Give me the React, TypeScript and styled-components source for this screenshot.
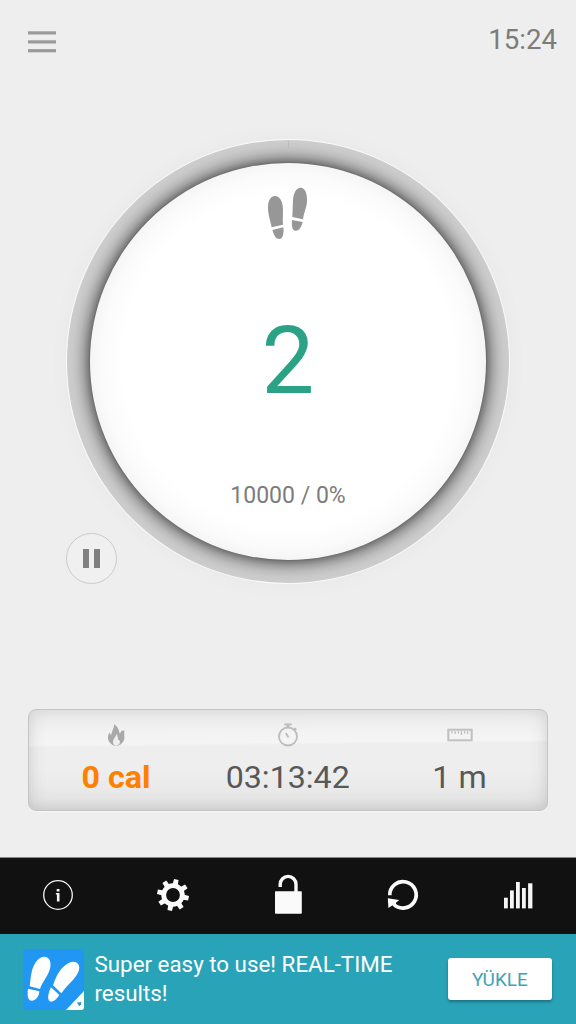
import React from 'react';
import styled, { createGlobalStyle } from 'styled-components';

const GlobalStyle = createGlobalStyle`
  * { box-sizing: border-box; }
  body {
    margin: 0;
    background: #eeeeee;
    font-family: Roboto, "Liberation Sans", sans-serif;
  }
  svg { display: block; }
`;

const Screen = styled.main`
  width: 576px;
  height: 1024px;
  display: flex;
  flex-direction: column;
  background: #eeeeee;
  overflow: hidden;
`;

const TopBar = styled.header`
  height: 139px;
  padding: 21px 19px 0 28px;
  display: flex;
  justify-content: space-between;
  align-items: flex-start;
`;

const MenuIcon = styled.svg`
  margin-top: 9px;
`;

const Clock = styled.time`
  margin-top: 1px;
  font-size: 27.6px;
  line-height: 36px;
  color: #7c7c7c;
`;

const Main = styled.section`
  position: relative;
  height: 570px;
  display: flex;
  flex-direction: column;
  align-items: center;
`;

const Dial = styled.div`
  width: 444px;
  height: 445px;
  flex: none;
  padding: 24px;
  border-radius: 50%;
  border: 1px solid #f9f9f9;
  background: radial-gradient(closest-side, #666 89.4%, #808080 90.5%, #a4a4a4 92.7%, #bcbcbc 95%, #c9c9c9 97.4%, #cdcdcd 100%);
  box-shadow: 0 0 22px rgba(0, 0, 0, 0.03);
`;

const DialTick = styled.span`
  position: absolute;
  top: 2px;
  left: 288px;
  width: 1px;
  height: 8px;
  background: #bcbcbc;
`;

const Face = styled.div`
  width: 396px;
  height: 397px;
  margin: -1px;
  padding-top: 23px;
  display: flex;
  flex-direction: column;
  align-items: center;
  border-radius: 50%;
  background: radial-gradient(closest-side, #fff 84%, #fbfbfb 94%, #f5f5f5 100%);
`;

const StepCount = styled.div`
  margin-top: 64px;
  font-size: 94px;
  line-height: 112px;
  color: #2ba286;
`;

const Goal = styled.div`
  margin-top: 65px;
  font-size: 23px;
  line-height: 28px;
  color: #7c7c7c;
`;

const PauseButton = styled.button`
  position: absolute;
  left: 66px;
  top: 394px;
  width: 51px;
  height: 51px;
  padding: 0;
  display: flex;
  gap: 4.5px;
  align-items: center;
  justify-content: center;
  border: 1.5px solid #cbcbcb;
  border-radius: 50%;
  background: #f0f0f0;
`;

const PauseBar = styled.span`
  width: 6.5px;
  height: 19px;
  background: #808080;
`;

const Stats = styled.section`
  height: 102px;
  margin: 0 28.5px 0 28px;
  display: grid;
  grid-template-columns: 174px 1fr 174px;
  border: 1px solid #c3c3c3;
  border-radius: 8px;
  background:
    linear-gradient(179.4deg, rgba(255, 255, 255, 0) 5%, rgba(255, 255, 255, 0.4) 33%, rgba(255, 255, 255, 0) 36%),
    linear-gradient(#eeeeee 60%, #e4e4e4 100%);
  box-shadow: inset 0 0 20px rgba(0, 0, 0, 0.1), inset 0 -3px 12px rgba(0, 0, 0, 0.05), 0 1px 1px #f8f8f8;
`;

const Stat = styled.div<{ $accent?: boolean }>`
  display: flex;
  flex-direction: column;
  align-items: center;
  padding-top: 10px;
  font-size: 32.2px;
  line-height: 38px;
  color: ${(p) => (p.$accent ? '#ff8000' : '#585858')};
  font-weight: ${(p) => (p.$accent ? 700 : 400)};
`;

const StatIcon = styled.svg`
  width: 30px;
  height: 30px;
  margin-bottom: 8px;
`;

const NavBar = styled.nav`
  height: 77px;
  margin-top: 46px;
  display: grid;
  grid-template-columns: repeat(5, 1fr);
  border-top: 1px solid #8a8a8a;
  background: #111111;
`;

const NavItem = styled.button`
  border: 0;
  padding: 0;
  background: none;
  display: flex;
  align-items: center;
  justify-content: center;
`;

const NavIcon = styled.svg`
  width: 44px;
  height: 44px;
  margin-top: -2px;
`;

const Ad = styled.aside`
  height: 90px;
  display: flex;
  padding: 0 24px 0 23px;
  background: #29a3b7;
`;

const AdIcon = styled.svg`
  width: 61px;
  height: 61px;
  margin-top: 15px;
`;

const AdText = styled.p`
  width: 320px;
  margin: 16px 0 0 10.5px;
  font-size: 22.35px;
  line-height: 29px;
  color: #fff;
`;

const AdButton = styled.button`
  width: 104px;
  height: 42px;
  margin: 24px 0 0 auto;
  padding: 0;
  border: 0;
  border-radius: 3px;
  background: #fff;
  box-shadow: 0 2px 3px rgba(0, 0, 0, 0.3);
  font: 400 19px Roboto, sans-serif;
  color: #3fa5b6;
`;

const gearTeeth = [0, 45, 90, 135, 180, 225, 270, 315];

export default function App() {
  return (
    <>
      <GlobalStyle />
      <Screen>
        <TopBar>
          <MenuIcon width="28" height="24" viewBox="0 0 28 24" fill="#9a9a9a">
            <rect y="1.3" width="28" height="3.2" />
            <rect y="10.3" width="28" height="3.2" />
            <rect y="19.1" width="28" height="3.2" />
          </MenuIcon>
          <Clock>15:24</Clock>
        </TopBar>

        <Main>
          <Dial>
            <Face>
              <svg width="44" height="55" viewBox="54 168 132 165" fill="#979797">
                <path d="M71 292C67 270 60 257 60 232C60 211 69 198 81 198C95 198 105 214 105 239C105 257 104 267 105 284Z" />
                <path d="M73 300L106 292C108 309 105 327 94 327C82 327 78 315 73 300Z" />
                <path d="M133 261C134 245 134 231 135 211C136 189 145 173 158 173C171 173 178 190 177 213C176 234 168 246 165 268Z" />
                <path d="M132 270L164 276C160 290 155 302 143 302C131 302 131 286 132 270Z" />
              </svg>
              <StepCount>2</StepCount>
              <Goal>10000 / 0%</Goal>
            </Face>
          </Dial>
          <DialTick />
          <PauseButton aria-label="Pause">
            <PauseBar />
            <PauseBar />
          </PauseButton>
        </Main>

        <Stats>
          <Stat $accent>
            <StatIcon viewBox="0 0 30 30">
              <path fill="#a9a9a9" d="M13 4C16.5 6.5 18.5 10 18.5 13.5C19.8 13 20.3 12 20.3 10.8L23.5 10.5C22.7 14 23.8 16.5 23.3 19C22.5 22.5 19.5 25.3 15.5 26C11 25.4 7.5 22.7 7 18.5C6.8 16 7.5 14 8.7 12.8L10.2 15.5C10.6 10.5 13.6 8 13 4Z" />
              <path fill="#efefef" d="M15.6 14C15 17 12.2 18.7 12 21.5C11.9 24 13.2 25.6 15.2 25.8C17.6 25.4 19 23.8 18.9 21.8C18.8 20.8 18.3 20 17.6 19.2L17 20.6C17.1 18 16.7 16 15.6 14Z" />
            </StatIcon>
            0 cal
          </Stat>
          <Stat>
            <StatIcon viewBox="0 0 30 30" fill="none" stroke="#bcbcbc" strokeWidth="1.8">
              <circle cx="15" cy="16.5" r="9" />
              <path d="M11.2 4.4H18.8M21.3 8L23.3 10M15.5 17.5L12.8 13" />
              <path strokeWidth="3" d="M15 4V8" />
            </StatIcon>
            03:13:42
          </Stat>
          <Stat>
            <StatIcon viewBox="0 0 30 30" fill="none" stroke="#c0c0c0" strokeWidth="2">
              <rect x="3.3" y="9.7" width="23.4" height="10.6" />
              <path strokeWidth="1.3" d="M7 11V13.5M10.2 11V14M13.4 11V13.5M16.4 11V15M19.6 11V13.5M22.6 11V14" />
            </StatIcon>
            1 m
          </Stat>
        </Stats>

        <NavBar>
          <NavItem aria-label="Info">
            <NavIcon viewBox="-22 -22 44 44">
              <circle r="14.3" fill="none" stroke="#f5f5f5" strokeWidth="1.3" />
              <path fill="#f5f5f5" d="M-1.3-5.9H1.5V-3.5H-1.3ZM-2.1-1.9H1.5V6.5H-1.1V-.6H-2.1Z" />
            </NavIcon>
          </NavItem>
          <NavItem aria-label="Settings">
            <NavIcon viewBox="-22 -22 44 44">
              <circle r="9.3" fill="none" stroke="#fafafa" strokeWidth="4.8" />
              {gearTeeth.map((a) => (
                <path key={a} fill="#fafafa" transform={`rotate(${a + 12})`} d="M-2.6-10L-2.3-15.9H2.3L2.6-10Z" />
              ))}
            </NavIcon>
          </NavItem>
          <NavItem aria-label="Unlock">
            <NavIcon viewBox="-22 -22 44 44">
              <rect x="-13" y="-3.8" width="26.8" height="22.5" rx="0.8" fill="#fafafa" />
              <path d="M-7.8-8V-10.7A7.9 7.9 0 0 1 8-10.7V-3" fill="none" stroke="#fafafa" strokeWidth="3.4" />
            </NavIcon>
          </NavItem>
          <NavItem aria-label="Reset">
            <NavIcon viewBox="-22 -22 44 44">
              <path d="M-13.2 .3A13.2 13.2 0 1 1-9.3 9.2" fill="none" stroke="#fafafa" strokeWidth="3.7" />
              <path fill="#fafafa" d="M-15.2 3.2L-3.8 5L-7 7.8L-6.8 11L-10.4 10.2L-14.6 13Z" />
            </NavIcon>
          </NavItem>
          <NavItem aria-label="Statistics">
            <NavIcon viewBox="-22 -22 44 44" fill="#f5f5f5">
              <rect x="-14" y="2.7" width="3.8" height="10.7" />
              <rect x="-8" y="-4.6" width="3.8" height="18" />
              <rect x="-2" y="-13" width="3.8" height="26.4" />
              <rect x="4" y="-7" width="3.8" height="20.4" />
              <rect x="10.1" y="-11.7" width="4.3" height="25.1" />
            </NavIcon>
          </NavItem>
        </NavBar>

        <Ad>
          <AdIcon viewBox="23 28 183 183">
            <rect x="23" y="28" width="183" height="183" rx="7" fill="#2196f3" />
            <g fill="#fff">
              <path d="M43 140C47 108 48 82 66 62C78 48 98 47 104 64C110 83 99 103 88 120C80 133 77 138 74 148Z" />
              <path d="M38 147L72 155C71 171 61 184 48 183C35 181 36 160 38 147Z" />
              <path d="M113 137C121 117 126 99 146 80C162 64 182 61 190 75C197 90 183 111 167 127C153 141 146 150 138 161Z" />
              <path d="M107 143L132 166C124 179 112 189 103 185C94 178 100 157 107 143Z" />
              <path d="M206 154V203Q206 211 198 211H152Z" />
            </g>
            <path fill="#2e8de0" d="M184 189L198 187L197 195L190 200L189 194Z" />
          </AdIcon>
          <AdText>Super easy to use! REAL-TIME results!</AdText>
          <AdButton>YÜKLE</AdButton>
        </Ad>
      </Screen>
    </>
  );
}
